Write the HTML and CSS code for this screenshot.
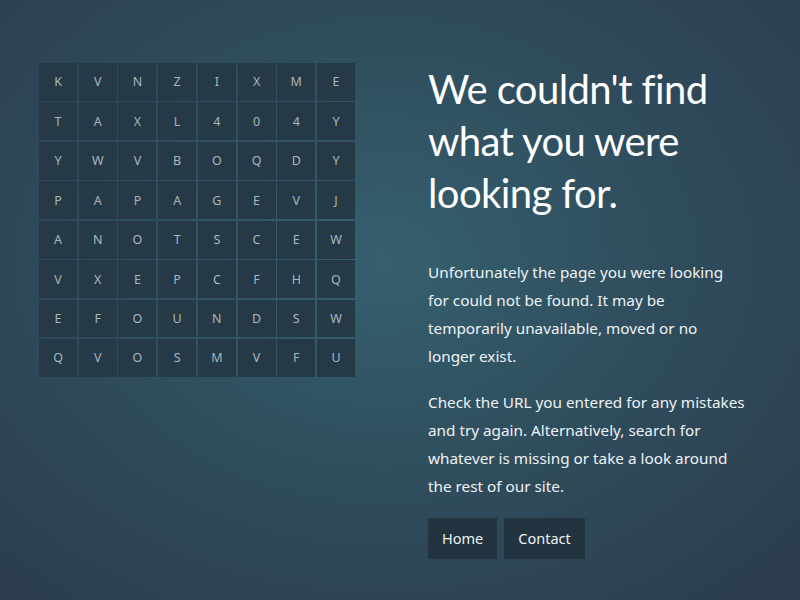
FILE: index.html
```html
<!DOCTYPE html>
<html lang="en">
<head>
<meta charset="utf-8">
<title>Page not found</title>
<link rel="stylesheet" href="styles.css">
</head>
<body>
<main class="page">
  <div class="grid">
    <span>K</span><span>V</span><span>N</span><span>Z</span><span>I</span><span>X</span><span>M</span><span>E</span>
    <span>T</span><span>A</span><span>X</span><span>L</span><span>4</span><span>0</span><span>4</span><span>Y</span>
    <span>Y</span><span>W</span><span>V</span><span>B</span><span>O</span><span>Q</span><span>D</span><span>Y</span>
    <span>P</span><span>A</span><span>P</span><span>A</span><span>G</span><span>E</span><span>V</span><span>J</span>
    <span>A</span><span>N</span><span>O</span><span>T</span><span>S</span><span>C</span><span>E</span><span>W</span>
    <span>V</span><span>X</span><span>E</span><span>P</span><span>C</span><span>F</span><span>H</span><span>Q</span>
    <span>E</span><span>F</span><span>O</span><span>U</span><span>N</span><span>D</span><span>S</span><span>W</span>
    <span>Q</span><span>V</span><span>O</span><span>S</span><span>M</span><span>V</span><span>F</span><span>U</span>
  </div>
  <section class="content">
    <h1 class="title">We couldn't find what you were looking for.</h1>
    <p class="text">Unfortunately the page you were looking for could not be found. It may be temporarily unavailable, moved or no longer exist.</p>
    <p class="text">Check the URL you entered for any mistakes and try again. Alternatively, search for whatever is missing or take a look around the rest of our site.</p>
    <nav class="actions">
      <a class="btn" href="#">Home</a>
      <a class="btn" href="#">Contact</a>
    </nav>
  </section>
</main>
</body>
</html>
```
FILE: styles.css
```css
html, body {
  margin: 0;
  padding: 0;
}
body {
  min-height: 620px;
  background: radial-gradient(ellipse 70% 70% at 48% 42%, #36606f 0%, #2f4d5d 50%, #2c3e50 100%);
  background-color: #2c3e50;
  font-family: "Noto Sans", "Liberation Sans", sans-serif;
  color: #f2f5f6;
}
.page {
  display: flex;
  align-items: flex-start;
  padding: 63px 0 60px 39px;
  gap: 73px;
}
.grid {
  flex: 0 0 316px;
  display: grid;
  grid-template-columns: repeat(8, 1fr);
  grid-auto-rows: 37.75px;
  gap: 1.7px;
}
.grid span {
  display: flex;
  align-items: center;
  justify-content: center;
  background: #253947;
  color: #a8b7bd;
  font-size: 12.5px;
}
.content {
  width: 318px;
}
.title {
  margin: 0 0 39px;
  font-family: "Lato", "Noto Sans", sans-serif;
  font-size: 40px;
  line-height: 52px;
  letter-spacing: -0.6px;
  font-weight: 400;
  color: #ffffff;
}
.text {
  margin: 0 0 18px;
  font-size: 15.3px;
  line-height: 28px;
  color: #eef2f3;
}
.actions {
  display: flex;
  gap: 7px;
  margin-top: 18px;
}
.btn {
  display: block;
  padding: 0 14px;
  height: 41px;
  line-height: 41px;
  background: #22343f;
  color: #eef2f3;
  font-size: 14.5px;
  text-decoration: none;
}
```
